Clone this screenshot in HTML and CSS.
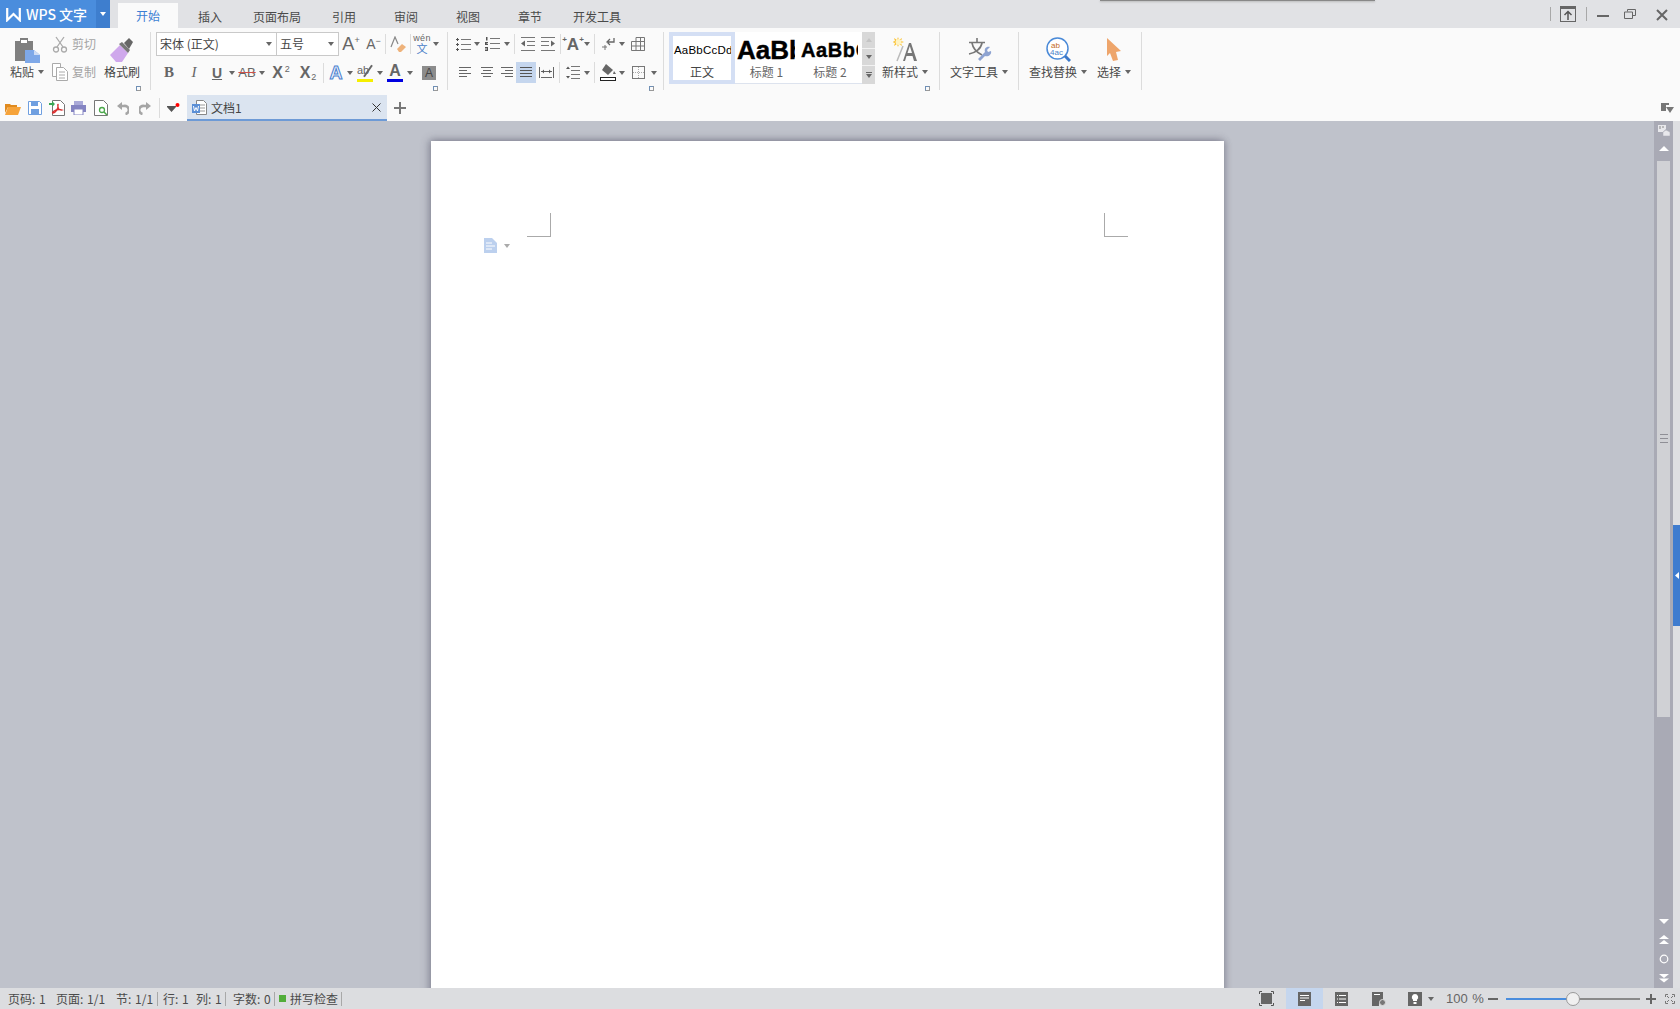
FILE: index.html
```html
<!DOCTYPE html>
<html lang="zh">
<head>
<meta charset="utf-8">
<title>WPS 文字</title>
<link rel="stylesheet" href="styles.css">
</head>
<body>
<div class="app">
  <header class="titlebar">
    <div class="logo">
      <div class="logo-main">
        <svg width="15" height="15" viewBox="0 0 15 15"><path d="M1.200 1v12.200L7.500 7l6.300 6.200V1" fill="none" stroke="#fff" stroke-width="2.200"/></svg>
        <span>WPS 文字</span>
      </div>
      <div class="logo-arrow"><i class="caret white"></i></div>
    </div>
    <nav class="tabs">
      <div class="tab active">开始</div><div class="tab">插入</div><div class="tab">页面布局</div><div class="tab">引用</div><div class="tab">审阅</div><div class="tab">视图</div><div class="tab">章节</div><div class="tab">开发工具</div>
    </nav>
    <div class="win">
      <i class="win-sep"></i>
      <svg class="w-up" width="16" height="16" viewBox="0 0 16 16"><rect x=".5" y=".5" width="15" height="15" fill="none" stroke="#666"/><rect width="16" height="3" fill="#666"/><path d="M8 14V6M4.500 9L8 5.500 11.500 9" fill="none" stroke="#555" stroke-width="1.500"/></svg>
      <i class="win-sep"></i>
      <svg class="w-min" width="12" height="2" viewBox="0 0 12 2"><rect width="12" height="2" fill="#666"/></svg>
      <svg class="w-max" width="12" height="10" viewBox="0 0 12 10"><path d="M3.500 2.500V.5h8v6H9M.5 3h8v6.500h-8z" fill="none" stroke="#666"/></svg>
      <svg class="w-close" width="12" height="12" viewBox="0 0 12 12"><path d="M1 1l10 10M11 1L1 11" stroke="#666" stroke-width="2"/></svg>
    </div>
    <i class="top-shadow"></i>
  </header>

  <section class="ribbon">
    <div class="group g-clip">
      <div class="big b-paste">
        <div class="big-icon"><svg width="26" height="26" viewBox="0 0 26 26"><path d="M0 4h5V1h8v3h5v20H0z" fill="#7f7f7f"/><rect x="6" y="3" width="6" height="3" fill="#fff"/><path d="M10 13h9l6 5v8H10z" fill="#7ea8e8"/><path d="M19 13v5h6" fill="#cfdcf3"/></svg></div>
        <div class="big-label">粘贴<i class="caret"></i></div>
      </div>
      <div class="clip-col">
        <div class="mini"><svg width="16" height="17" viewBox="0 0 16 17"><g fill="none" stroke="#aaa" stroke-width="1.300"><circle cx="4" cy="13.500" r="2.500"/><circle cx="12" cy="13.500" r="2.500"/><path d="M5 11L12 1M11 11L4 1"/></g></svg><span>剪切</span></div>
        <div class="mini"><svg width="16" height="18" viewBox="0 0 16 18"><g fill="#fff" stroke="#aaa"><path d="M.5.500h8v13h-8z"/><path d="M4.500 4.500h7l4 4v9h-11z"/><path d="M7 9h6M7 12h6M7 15h6"/></g></svg><span>复制</span></div>
      </div>
      <div class="big b-brush">
        <div class="big-icon"><svg width="24" height="24" viewBox="0 0 24 24"><path d="M0 17L10 7l8 8-6 9H6z" fill="#cfa8ec"/><path d="M9 6l9 9 2-3-8-8z" fill="#777"/><path d="M14 5l5-5 4 4-4 7z" fill="#666"/></svg></div>
        <div class="big-label dark">格式刷</div>
      </div>
      <i class="launch"></i>
    </div>

    <div class="group g-font">
      <div class="row r-font1">
        <div class="select s-font"><span>宋体 (正文)</span><i class="caret"></i></div>
        <div class="select s-size"><span>五号</span><i class="caret"></i></div>
        <div class="cell glyph big-a">A<sup>+</sup></div>
        <div class="cell glyph mid-a">A<sup>−</sup></div>
        <div class="cell"><i class="vsep"></i></div>
        <div class="cell"><svg width="16" height="17" viewBox="0 0 16 17"><path d="M1 11L5 1l3 7" fill="none" stroke="#888" stroke-width="1.200"/><path d="M7 13l5-5 4 3-5 5H9z" fill="#eeb27a"/></svg></div>
        <div class="cell"><i class="vsep"></i></div>
        <div class="cell wen"><span class="wen-py">wén</span><span class="wen-zh">文</span></div>
        <div class="cell"><i class="caret"></i></div>
      </div>
      <div class="row r-font2">
        <div class="cell glyph fmt-b">B</div>
        <div class="cell glyph fmt-i">I</div>
        <div class="cell glyph fmt-u">U</div>
        <div class="cell"><i class="caret"></i></div>
        <div class="cell glyph fmt-s">AB</div>
        <div class="cell"><i class="caret"></i></div>
        <div class="cell glyph fmt-x">X<sup>2</sup></div>
        <div class="cell glyph fmt-x">X<sub>2</sub></div>
        <div class="cell"><i class="vsep"></i></div>
        <div class="cell glyph fmt-o">A</div>
        <div class="cell"><i class="caret"></i></div>
        <div class="cell"><div class="hl">ab</div></div>
        <div class="cell"><i class="caret"></i></div>
        <div class="cell"><div class="fc">A</div></div>
        <div class="cell"><i class="caret"></i></div>
        <div class="cell"><div class="shade">A</div></div>
      </div>
      <i class="launch"></i>
    </div>

    <div class="group g-para">
      <div class="row r-para1">
        <div class="cell"><svg width="15" height="13" viewBox="0 0 15 13"><path d="M5 1.500h10M5 6.500h10M5 11.500h10" stroke="#777"/><path d="M0 1h3v1H0zM1 0h1v3H1zM0 6h3v1H0zM1 5h1v3H1zM0 11h3v1H0zM1 10h1v3H1z" fill="#555"/></svg></div>
        <div class="cell"><i class="caret"></i></div>
        <div class="cell"><svg width="15" height="14" viewBox="0 0 15 14"><path d="M5 1.500h10M5 6.500h10M5 11.500h10" stroke="#777"/><path d="M1 0h1.500v3.500H1zM0 5h3v1l-2 1h2v1H0zM0 10h3v4H0v-1h2v-.5H0v-1h2V11H0z" fill="#555"/></svg></div>
        <div class="cell"><i class="caret"></i></div>
        <div class="cell"><i class="vsep"></i></div>
        <div class="cell"><svg width="14" height="14" viewBox="0 0 14 14"><path d="M0 .5h14M6 4.500h8M6 8.500h8M0 13.500h14" stroke="#777"/><path d="M0 6.500L4 3.500v6z" fill="#666"/></svg></div>
        <div class="cell"><svg width="14" height="14" viewBox="0 0 14 14"><path d="M0 .5h14M0 4.500h8M0 8.500h8M0 13.500h14" stroke="#777"/><path d="M14 6.500L10 3.500v6z" fill="#666"/></svg></div>
        <div class="cell"><i class="vsep"></i></div>
        <div class="cell glyph a-up"><span>+</span>A<span>+</span></div>
        <div class="cell"><i class="caret"></i></div>
        <div class="cell"><i class="vsep"></i></div>
        <div class="cell"><svg width="13" height="14" viewBox="0 0 13 14"><path d="M12 1v4H6M8 2L5 5l3 3" fill="none" stroke="#666" stroke-width="1.300"/><path d="M0 10h5M3 8v5" stroke="#777"/></svg></div>
        <div class="cell"><i class="caret"></i></div>
        <div class="cell"><svg width="14" height="14" viewBox="0 0 14 14"><path d="M.5 4.500h13v9H.5zM5 .5h8.500v13M5 .5v13M9.500.5v13M.5 9h13" fill="none" stroke="#777"/></svg></div>
      </div>
      <div class="row r-para2">
        <div class="cell"><svg width="12" height="11" viewBox="0 0 12 11"><path d="M0 .5h12M0 3.500h8M0 6.500h12M0 9.500h8" stroke="#666"/></svg></div>
        <div class="cell"><svg width="12" height="11" viewBox="0 0 12 11"><path d="M0 .5h12M2 3.500h8M0 6.500h12M2 9.500h8" stroke="#666"/></svg></div>
        <div class="cell"><svg width="12" height="11" viewBox="0 0 12 11"><path d="M0 .5h12M4 3.500h8M0 6.500h12M4 9.500h8" stroke="#666"/></svg></div>
        <div class="cell on"><svg width="12" height="11" viewBox="0 0 12 11"><path d="M0 .5h12M0 3.500h12M0 6.500h12M0 9.500h12" stroke="#555"/></svg></div>
        <div class="cell"><svg width="15" height="11" viewBox="0 0 15 11"><path d="M.5 0v11M14.500 0v11M2 10.500h11M2 4.500h11" stroke="#666"/><path d="M3 4.500l2-2v4zM12 4.500l-2-2v4z" fill="#555"/></svg></div>
        <div class="cell"><i class="vsep tall"></i></div>
        <div class="cell"><svg width="14" height="13" viewBox="0 0 14 13"><path d="M5 .5h9M5 4.500h9M5 8.500h9M5 12.500h9" stroke="#777"/><path d="M0 3l2-2.500L4 3zM0 10l2 2.500L4 10z" fill="#555"/></svg></div>
        <div class="cell"><i class="caret"></i></div>
        <div class="cell"><i class="vsep tall"></i></div>
        <div class="cell"><svg width="16" height="17" viewBox="0 0 16 17"><path d="M6 0l7 6-5 5-6-5z" fill="#666"/><path d="M14 7l2 3h-3z" fill="#666"/><rect x=".5" y="13.500" width="15" height="3" fill="#fff" stroke="#222"/></svg></div>
        <div class="cell"><i class="caret"></i></div>
        <div class="cell"><svg width="13" height="13" viewBox="0 0 13 13"><rect x=".5" y=".5" width="12" height="12" fill="none" stroke="#777"/><path d="M6.500 1v11M1 6.500h11" stroke="#aaa" stroke-dasharray="1 1"/></svg></div>
        <div class="cell"><i class="caret"></i></div>
      </div>
      <i class="launch"></i>
    </div>

    <div class="group g-styles">
      <div class="gallery">
        <div class="style s-normal"><div class="style-view"><span class="pv-normal">AaBbCcDd</span></div><div class="style-name dark">正文</div></div>
        <div class="style s-h1"><div class="style-view"><span class="pv-h1">AaBbCcDd</span></div><div class="style-name">标题 1</div></div>
        <div class="style s-h2"><div class="style-view"><span class="pv-h2">AaBbCcDd</span></div><div class="style-name">标题 2</div></div>
        <div class="g-scroll">
          <div class="g-btn"><i class="caret up pale"></i></div>
          <div class="g-btn"><i class="caret"></i></div>
          <div class="g-btn more"><i class="bar"></i><i class="caret"></i></div>
        </div>
      </div>
      <div class="big b-new">
        <div class="big-icon"><svg width="25" height="25" viewBox="0 0 25 25"><path d="M5 0l1 3 3-2-1 3 3 1-3 1 1 3-3-2-1 3-1-3-3 2 1-3-3-1 3-1-1-3 3 2z" fill="#fbc02d"/><circle cx="5.500" cy="5" r="3" fill="#fff3c4"/><path d="M4 24L10 9" stroke="#bbb" stroke-width="1.500"/><path d="M10 24L16 6h2l6 18h-3l-1.500-5h-6L12 24zM14.500 16h4.500l-2.200-7z" fill="#777"/></svg></div>
        <div class="big-label">新样式<i class="caret"></i></div>
      </div>
      <i class="launch"></i>
    </div>

    <div class="group g-tools">
      <div class="big b-tools">
        <div class="big-icon"><svg width="24" height="24" viewBox="0 0 24 24"><path d="M9 0v4M1 4.500h16M4 5c1 6 6 10 10 12M14 5C13 11 7 15 1 16" fill="none" stroke="#777" stroke-width="1.600"/><path d="M10 21l7-7c-1-3 1-6 5-5l-3 3 1 2 3-1c1 4-3 6-6 5l-5 5z" fill="#8ea3d1"/></svg></div>
        <div class="big-label">文字工具<i class="caret"></i></div>
      </div>
    </div>

    <div class="group g-find">
      <div class="big b-find">
        <div class="big-icon"><svg width="25" height="25" viewBox="0 0 25 25"><circle cx="11.500" cy="11.500" r="10.500" fill="#fff" stroke="#4a8ad8" stroke-width="1.500"/><path d="M19 19l5 5" stroke="#3b78c8" stroke-width="3"/><text x="5" y="11" class="find-t1">ab</text><text x="4" y="18" class="find-t2">4ac</text></svg></div>
        <div class="big-label">查找替换<i class="caret"></i></div>
      </div>
      <div class="big b-sel">
        <div class="big-icon"><svg width="16" height="24" viewBox="0 0 16 24"><path d="M1 0l14 13-5 1 2 8-5 1-3-8-3 3z" fill="#eea56b"/></svg></div>
        <div class="big-label">选择<i class="caret"></i></div>
      </div>
    </div>
  </section>

  <section class="qat">
    <div class="qat-icons">
      <svg width="16" height="13" viewBox="0 0 16 13"><path d="M0 2h5l1 1h6v2H3L0 11z" fill="#e08a1e"/><path d="M3 5h13l-3 8H0z" fill="#f6a33a"/></svg>
      <svg width="14" height="14" viewBox="0 0 14 14"><path d="M.5.500h11l2 2v11H.5z" fill="#fff" stroke="#6f9fe0"/><rect x="3" y="1" width="7" height="4" fill="#6f9fe0"/><rect x="3" y="8" width="8" height="5" fill="#6f9fe0"/></svg>
      <svg width="16" height="16" viewBox="0 0 16 16"><path d="M3.500.5h8l4 4v11h-12z" fill="#fff" stroke="#777"/><path d="M0 3h3V1l3 3-3 3V5H0z" fill="#3aa655"/><path d="M9 4c1 5-3 9-5 9s3-5 9-3c-3 1-5-3-4-6" fill="none" stroke="#d92f2f" stroke-width="1.300"/></svg>
      <svg width="15" height="14" viewBox="0 0 15 14"><rect x="3" width="9" height="4" fill="#a9a9d8"/><rect y="4" width="15" height="7" fill="#8484c2"/><rect x="3" y="8" width="9" height="6" fill="#fff" stroke="#8484c2"/></svg>
      <svg width="14" height="16" viewBox="0 0 14 16"><path d="M.5.500h9l4 4v11H.5z" fill="#fff" stroke="#777"/><circle cx="8" cy="10" r="2.500" fill="none" stroke="#4aa84a" stroke-width="1.300"/><path d="M10 12l3 3" stroke="#4aa84a" stroke-width="1.500"/></svg>
      <svg width="12" height="13" viewBox="0 0 12 13"><path d="M0 4l5-4v8z" fill="#a5a5a5"/><path d="M4 4h3a4 4 0 0 1 1.500 8" fill="none" stroke="#a5a5a5" stroke-width="2.600"/></svg>
      <svg width="12" height="13" viewBox="0 0 12 13"><path d="M12 4L7 0v8z" fill="#a5a5a5"/><path d="M8 4H5a4 4 0 0 0-1.500 8" fill="none" stroke="#a5a5a5" stroke-width="2.600"/></svg>
      <i class="qat-sep"></i>
      <div class="qat-menu"><svg width="13" height="11" viewBox="0 0 13 11"><path d="M0 4h9L4.500 9z M0 3h9v1H0z" fill="#555"/><circle cx="10.500" cy="2" r="2" fill="#f00"/></svg></div>
    </div>
    <div class="doc-tab">
      <svg width="15" height="15" viewBox="0 0 15 15"><path d="M4.500.5h7l3 3v11h-10z" fill="#fff" stroke="#888"/><path d="M8 5h5M8 8h5M8 11h5" stroke="#999"/><rect y="4" width="8" height="9" fill="#5b8fd6"/><path d="M1.500 6l1 5 1.500-3.500L5.500 11l1-5" fill="none" stroke="#fff"/></svg>
      <span class="doc-name">文档1</span>
      <svg class="doc-x" width="9" height="9" viewBox="0 0 9 9"><path d="M.5.500l8 8M8.500.5l-8 8" stroke="#333"/></svg>
    </div>
    <svg class="doc-add" width="14" height="14" viewBox="0 0 14 14"><path d="M7 1v12M1 7h12" stroke="#777" stroke-width="2"/></svg>
    <svg class="qat-end" width="13" height="11" viewBox="0 0 13 11"><path d="M0 0h8v2h-3v6H0z" fill="#777"/><path d="M5 4h8l-4 6z" fill="#777"/></svg>
  </section>

  <main class="work">
    <div class="canvas">
      <div class="page">
        <div class="marks"><i class="mark m-l"></i><i class="mark m-r"></i></div>
        <div class="para-tag">
          <svg width="13" height="15" viewBox="0 0 13 15"><path d="M0 0h8l5 5v10H0z" fill="#bcd0ee"/><path d="M2 5h6M2 8h9M2 11h6" stroke="#fff"/></svg>
          <i class="caret pale"></i>
        </div>
      </div>
    </div>
    <aside class="vscroll">
      <div class="vs-top">
        <svg width="12" height="11" viewBox="0 0 12 11"><path d="M0 0h8v4L5 7H0z" fill="#e8e8ec"/><path d="M5 11V7l3-2 2 1 2 1v4z" fill="#e8e8ec" stroke="#a9aab5" stroke-width=".5"/><path d="M2 1v3M5 1v2" stroke="#888"/></svg>
        <i class="arrow up"></i>
      </div>
      <div class="vs-track"><div class="thumb"><div class="grip"><i></i><i></i><i></i></div></div></div>
      <div class="vs-bottom">
        <i class="arrow down"></i>
        <svg width="10" height="10" viewBox="0 0 10 10"><path d="M0 4l5-4 5 4zM0 9l5-4 5 4z" fill="#fff"/></svg>
        <svg width="10" height="10" viewBox="0 0 10 10"><circle cx="5" cy="5" r="3.800" fill="none" stroke="#fff" stroke-width="1.200"/></svg>
        <svg width="10" height="10" viewBox="0 0 10 10"><path d="M0 1l5 4 5-4zM0 5.500l5 4 5-4z" fill="#fff"/></svg>
      </div>
    </aside>
    <aside class="side"><div class="side-tab"><svg width="4" height="7" viewBox="0 0 4 7"><path d="M4 0v7L0 3.500z" fill="#fff"/></svg></div></aside>
  </main>

  <footer class="status">
    <div class="st-left">
      <span class="st-1">页码: 1</span><span class="st-2">页面: 1/1</span><span class="st-3">节: 1/1</span><i class="st-sep"></i><span class="st-4">行: 1</span><span class="st-5">列: 1</span><i class="st-sep"></i><span class="st-6">字数: 0</span><i class="st-sep"></i><i class="st-green"></i><span class="st-7">拼写检查</span><i class="st-sep"></i>
    </div>
    <div class="st-right">
      <div class="st-btn w-fit"><svg width="15" height="15" viewBox="0 0 15 15"><rect x="2" y="2" width="11" height="11" fill="#666"/><path d="M.5 3V.5H3M12 .5h2.500V3M.5 12v2.500H3M12 14.500h2.500V12" fill="none" stroke="#555"/></svg></div>
      <div class="st-btn on"><svg width="13" height="14" viewBox="0 0 13 14"><rect width="13" height="14" fill="#666"/><path d="M2 3.500h9M2 6h9M2 8.500h5" stroke="#fff"/></svg></div>
      <div class="st-btn"><svg width="13" height="14" viewBox="0 0 13 14"><rect width="13" height="14" fill="#666"/><path d="M4 3.500h7M4 7h7M4 10.500h7M2 3.500h1M2 7h1M2 10.500h1" stroke="#fff"/></svg></div>
      <div class="st-btn"><svg width="14" height="14" viewBox="0 0 14 14"><path d="M0 0h11v9a4 4 0 0 0-4 5H0z" fill="#666"/><path d="M2 2.500h6" stroke="#fff"/><circle cx="10.500" cy="10.500" r="3" fill="#777" stroke="#ddd"/></svg></div>
      <div class="st-btn w-bulb"><svg width="14" height="14" viewBox="0 0 14 14"><rect width="14" height="14" fill="#666"/><path d="M7 2a3.200 3.200 0 0 0-2 5.700V9h4V7.700A3.200 3.200 0 0 0 7 2zM5.500 10h3v2h-3z" fill="#fff"/></svg><i class="caret"></i></div>
      <span class="zoom-val">100 %</span>
      <svg class="zm" width="10" height="2" viewBox="0 0 10 2"><rect width="10" height="2" fill="#666"/></svg>
      <div class="slider"><i class="s-fill"></i><i class="s-knob"></i></div>
      <svg class="zp" width="10" height="10" viewBox="0 0 10 10"><path d="M0 4h10v2H0zM4 0h2v10H4z" fill="#666"/></svg>
      <svg class="fs" width="10" height="10" viewBox="0 0 10 10"><path d="M.5 3V.5H3M7 .5h2.500V3M.5 7v2.500H3M7 9.500h2.500V7M2 2l2 2M8 2L6 4M2 8l2-2M8 8L6 6" fill="none" stroke="#777"/></svg>
    </div>
  </footer>
</div>
</body>
</html>
```

FILE: styles.css
```css
* { box-sizing: border-box; }
html, body { margin: 0; height: 100%; overflow: hidden; }
body {
  font: 12px/16px "Noto Sans CJK SC", "Liberation Sans", sans-serif;
  color: #4a4a4a;
}
i { display: block; }
svg { display: block; flex: none; }
.app { width: 1680px; height: 1009px; display: flex; flex-direction: column; background: #bfc2cb; }

.caret { width: 0; height: 0; border: 3px solid transparent; border-top: 4px solid #666; border-bottom: 0; flex: none; }
.caret.white { border-top-color: #fff; }
.caret.pale { border-top-color: #aaa; }
.caret.up { border: 3px solid transparent; border-bottom: 4px solid #c4c4c4; border-top: 0; }

/* title bar */
.titlebar { height: 28px; background: #e1e2e5; display: flex; position: relative; flex: none; }
.logo { width: 110px; display: flex; background: #4a8ddd; color: #fff; }
.logo-main { width: 96px; display: flex; align-items: center; padding-left: 6px; gap: 5px; font-weight: 500; font-size: 14px; }
.logo-arrow { width: 14px; background: #3e7ece; display: flex; align-items: center; justify-content: center; }
.tabs { margin: 3px 0 0 8px; display: grid; grid-template-columns: 60px 64px 70px 64px 60px 64px 60px 74px; }
.tab { display: flex; align-items: center; justify-content: center; padding-top: 3px; color: #4a4a4a; }
.tab.active { background: #fafafa; color: #3b7fd4; padding-top: 0; }
.win { margin-left: auto; display: flex; align-items: flex-start; padding-top: 6px; }
.win-sep { width: 1px; height: 14px; background: #a8a8a8; margin: 1px 9px 0; }
.w-up { margin-right: 1px; }
.w-min { margin: 9px 15px 0 1px; }
.w-max { margin: 3px 20px 0 0; }
.w-close { margin: 3px 12px 0 0; }
.top-shadow { position: absolute; left: 1100px; top: 0; width: 275px; height: 1px; background: #888; box-shadow: 0 1px 2px #aaa; }

/* ribbon */
.ribbon { height: 67px; background: #fafafa; display: flex; padding-top: 4px; flex: none; align-items: flex-start; }
.group { height: 58px; border-right: 1px solid #dcdcdc; position: relative; flex: none; }
.launch { position: absolute; right: 9px; bottom: -1px; width: 5px; height: 5px; border: 1px solid #6f8fb5; border-right-color: #999; border-bottom-color: #999; }
.g-clip { width: 151px; display: flex; }
.g-font { width: 297px; padding-left: 5px; }
.g-para { width: 216px; padding-left: 5px; }
.g-styles { width: 276px; padding-left: 5px; display: flex; }
.g-tools { width: 79px; display: flex; }
.g-find { width: 123px; display: flex; }

.big { display: flex; flex-direction: column; align-items: center; flex: none; }
.big-icon { height: 32px; display: flex; align-items: center; justify-content: center; padding-top: 3px; }
.big-label { height: 16px; display: flex; align-items: center; gap: 4px; white-space: nowrap; }
.big-label.dark { color: #444; }
.b-paste { width: 42px; margin-left: 8px; }
.b-paste .big-icon { margin-right: 3px; }
.b-paste .big-label { padding-right: 4px; }
.clip-col { width: 50px; display: flex; flex-direction: column; gap: 4px; }
.mini { height: 24px; display: flex; align-items: center; padding-left: 2px; gap: 4px; color: #a4a4a4; }
.b-brush { width: 40px; margin-left: 2px; }
.b-new { width: 50px; margin-left: 5px; }
.b-tools { width: 64px; margin-left: 7px; }
.b-tools .big-icon { margin-left: 1px; }
.b-find { width: 62px; margin-left: 8px; }
.b-sel { width: 36px; margin-left: 7px; }
.find-t1 { font: 8px "Liberation Sans", sans-serif; fill: #c46a1e; }
.find-t2 { font: 8px "Liberation Sans", sans-serif; fill: #4a7fc8; }

.row { display: grid; align-items: center; }
.cell { display: flex; align-items: center; justify-content: center; height: 100%; min-width: 0; }
.r-font1 { height: 24px; grid-template-columns: 121px 62px 24px 21px 3px 22px 3px 20px 8px; }
.r-font2 { height: 25px; margin-top: 4px; grid-template-columns: 26px 24px 22px 8px 22px 8px 30px 24px 6px 20px 8px 22px 8px 22px 8px 30px; }
.r-para1 { height: 24px; grid-template-columns: 20px 8px 22px 8px 7px 20px 20px 5px 20px 8px 7px 20px 8px 24px; }
.r-para2 { height: 25px; margin-top: 4px; grid-template-columns: 24px 20px 19px 20px 20px 7px 20px 8px 7px 20px 8px 24px 8px; }
.vsep { width: 1px; height: 20px; background: #dcdcdc; }
.vsep.tall { height: 21px; }
.cell.on { background: #c5d6ee; height: 21px; }

.select { height: 24px; border: 1px solid #c9c9c9; background: #fff; display: flex; align-items: center; padding: 0 4px 0 3px; justify-content: space-between; color: #444; }
.s-size { border-left: 0; }

.glyph { font-family: "Liberation Sans", sans-serif; color: #666; line-height: 1; }
.glyph sup, .glyph sub { font-size: 9px; line-height: 0; }
.big-a { font-size: 18px; }
.big-a sup { margin-top: -9px; }
.mid-a { font-size: 14px; }
.mid-a sup { margin-top: -7px; }
.fmt-b { font-size: 15px; font-weight: 700; font-family: "Liberation Serif", serif; }
.fmt-i { font-size: 15px; font-style: italic; font-family: "Liberation Serif", serif; }
.fmt-u { font-size: 14px; font-weight: 700; text-decoration: underline; }
.fmt-s { font-size: 13px; text-decoration: line-through; text-decoration-color: #d0504a; }
.fmt-x { font-size: 16px; font-weight: 700; }
.fmt-x sup { margin: -8px 0 0 2px; font-weight: 400; }
.fmt-x sub { margin: 8px 0 0 1px; font-weight: 400; }
.fmt-o { font-size: 18px; color: #eef3fb; -webkit-text-stroke: 1px #4a80d0; font-weight: 700; }
.a-up { font-size: 17px; font-weight: 700; }
.a-up span { font-size: 8px; margin-top: -8px; }
.hl { width: 16px; height: 19px; border-bottom: 3px solid #f6ef00; font: 11px/15px "Liberation Sans", sans-serif; color: #666; white-space: nowrap; position: relative; }
.hl::after { content: ""; position: absolute; left: 10px; top: 1px; width: 2px; height: 14px; background: #666; transform: rotate(35deg); }
.fc { width: 16px; height: 19px; border-bottom: 3px solid #0000e0; font: 700 16px/16px "Liberation Sans", sans-serif; color: #666; text-align: center; }
.shade { width: 14px; height: 14px; background: #8c8c8c; color: #444; font: 12px/14px "Liberation Sans", sans-serif; text-align: center; }
.wen { flex-direction: column; color: #4a80c8; line-height: 1; }
.wen-py { font: 9px/9px "Liberation Sans", sans-serif; color: #666; letter-spacing: .3px; }
.wen-zh { font-size: 11px; line-height: 11px; }

.gallery { width: 206px; height: 52px; display: flex; flex: none; background: #fff; }
.style { height: 52px; overflow: hidden; flex: none; }
.s-normal { width: 66px; border: 4px solid #d4dff4; }
.s-h1 { width: 63px; border-bottom: 1px solid #dde3ee; }
.s-h2 { width: 64px; border-bottom: 1px solid #dde3ee; }
.style-view { height: 32px; display: flex; align-items: center; overflow: hidden; font-family: "Liberation Sans", sans-serif; color: #000; white-space: nowrap; }
.s-h1 .style-view { margin: 0 3px 0 2px; padding-top: 4px; }
.s-h2 .style-view { margin: 0 4px 0 3px; padding-top: 4px; }
.s-normal .style-view { height: 28px; padding-left: 1px; }
.pv-normal { font-size: 11.500px; letter-spacing: .2px; }
.pv-h1 { font-size: 26px; font-weight: 700; -webkit-text-stroke: .4px #000; }
.pv-h2 { font-size: 20px; font-weight: 700; letter-spacing: .6px; -webkit-text-stroke: .4px #000; }
.style-name { text-align: center; height: 16px; color: #666; }
.style-name.dark { color: #444; }
.g-scroll { width: 13px; display: flex; flex-direction: column; background: #d8d8d8; }
.g-btn { height: 17px; display: flex; flex-direction: column; gap: 1px; align-items: center; justify-content: center; border-bottom: 1px solid #f2f2f2; }
.g-btn.more { height: 18px; border: 0; }
.bar { width: 6px; height: 1px; background: #666; }

/* quick access */
.qat { height: 26px; background: #fafafa; display: flex; align-items: center; flex: none; }
.qat-icons { display: grid; grid-template-columns: 25px 20px 24px 19px 26px 18px 26px 2px 26px; justify-items: center; align-items: center; width: 186px; }
.qat-sep { width: 1px; height: 20px; background: #dcdcdc; }
.doc-tab { width: 200px; height: 26px; margin-left: 1px; background: #dbe4f0; border-bottom: 2px solid #6d9ad6; display: flex; align-items: center; padding: 1px 6px 0 5px; color: #444; }
.doc-name { margin-left: 4px; }
.doc-x { margin-left: auto; }
.doc-add { margin-left: 6px; }
.qat-end { margin-left: auto; margin-right: 6px; }

/* document area */
.work { flex: 1; min-height: 0; display: flex; overflow: hidden; }
.canvas { width: 1654px; padding: 20px 0 0 431px; overflow: hidden; }
.page { width: 793px; height: 900px; background: #fff; box-shadow: -2px -1px 8px rgba(70,70,90,.45), 2px 0 6px rgba(70,70,90,.25); padding: 72px 96px 0; }
.marks { display: flex; justify-content: space-between; }
.mark { width: 24px; height: 24px; border-bottom: 1px solid #aaa; }
.m-l { border-right: 1px solid #aaa; }
.m-r { border-left: 1px solid #aaa; }
.para-tag { margin: 1px 0 0 -43px; display: flex; align-items: center; gap: 7px; }

.vscroll { width: 19px; background: #a9aab5; display: flex; flex-direction: column; align-items: center; }
.vs-top { height: 40px; display: flex; flex-direction: column; align-items: center; padding-top: 4px; flex: none; }
.vs-top .arrow { margin-top: 10px; }
.arrow { width: 0; height: 0; border-left: 5px solid transparent; border-right: 5px solid transparent; }
.arrow.up { border-bottom: 5px solid #fff; }
.arrow.down { border-top: 5px solid #fff; margin-bottom: 2px; }
.vs-track { flex: 1; width: 13px; }
.thumb { height: 556px; background: #d0d1d5; display: flex; align-items: center; justify-content: center; }
.grip { width: 8px; display: flex; flex-direction: column; gap: 3px; margin-bottom: 2px; }
.grip i { height: 1px; background: #8f8f96; }
.vs-bottom { height: 72px; flex: none; display: flex; flex-direction: column; align-items: center; padding-top: 3px; gap: 9px; }
.side { width: 7px; background: #dedfe2; padding-top: 404px; }
.side-tab { height: 101px; background: #3f7ccf; display: flex; align-items: center; justify-content: center; }

/* status bar */
.status { height: 21px; flex: none; background: #dcdde0; display: flex; align-items: center; white-space: nowrap; word-spacing: 1px; }
.st-left { display: flex; align-items: center; padding-left: 8px; }
.st-1 { width: 48px; }
.st-2 { width: 60px; }
.st-3 { width: 41px; }
.st-4 { width: 33px; margin-left: 1px; }
.st-5 { width: 29px; }
.st-6 { width: 41px; margin-left: 3px; }
.st-7 { margin-right: 3px; }
.st-sep { width: 1px; height: 14px; background: #a8a8a8; margin-right: 4px; }
.st-green { width: 7px; height: 7px; background: #52ad3a; margin-right: 4px; }
.st-right { margin-left: auto; display: flex; align-items: center; height: 21px; }
.st-btn { width: 37px; height: 21px; display: flex; align-items: center; justify-content: center; gap: 6px; }
.st-btn.on { background: #c5d6ee; }
.w-fit { margin-right: 1px; }
.w-bulb { margin-left: 3px; width: 42px; }
.zoom-val { font: 13px "Liberation Sans", sans-serif; color: #666; width: 42px; margin-left: 4px; }
.zm { margin-right: 8px; }
.slider { width: 134px; height: 2px; background: #8a8a8a; position: relative; }
.s-fill { width: 67px; height: 2px; background: #4a8ddd; }
.s-knob { position: absolute; left: 60px; top: -6px; width: 14px; height: 14px; border-radius: 50%; background: #f0f0f0; border: 1px solid #999; }
.zp { margin-left: 6px; }
.fs { margin: 0 5px 0 9px; }
```
